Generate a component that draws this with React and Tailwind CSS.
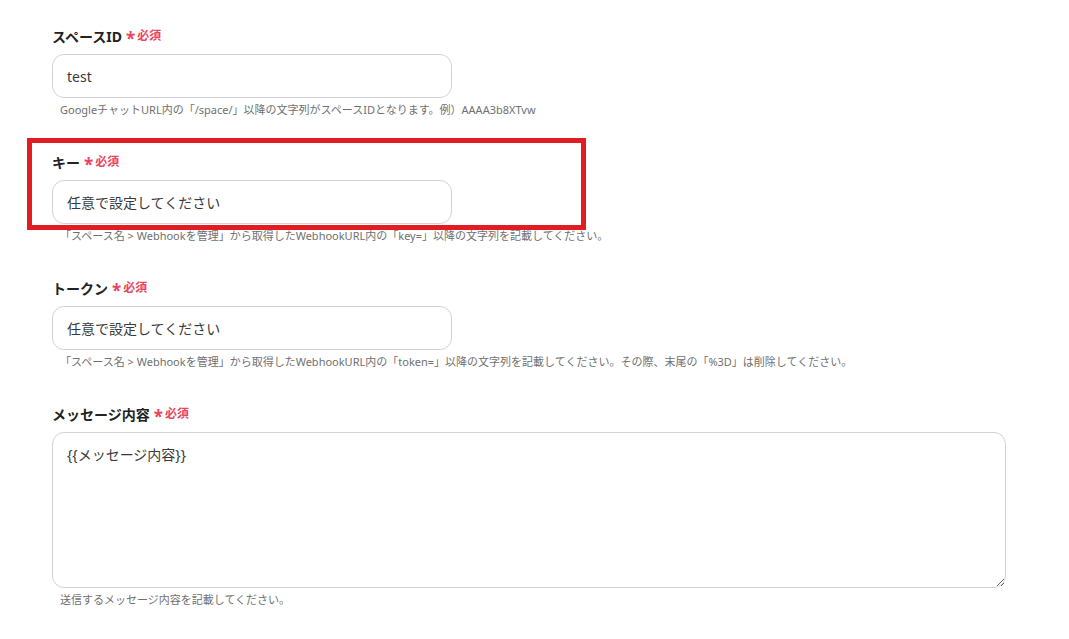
import React from "react";

const font = { fontFamily: '"Noto Sans", "Noto Sans CJK JP", sans-serif' };

const Label = ({ children }) => (
  <div className="flex items-center h-5 mb-2">
    <span className="text-[14px] font-bold text-[#222]">{children}</span>
    <span className="ml-1 text-[17px] font-bold text-[#e94560] leading-none mt-[5px]">*</span>
    <span className="ml-[2px] text-[12px] font-bold text-[#e94560]">必須</span>
  </div>
);

const Field = ({ label, value, help }) => (
  <div className="mb-[34px]">
    <Label>{label}</Label>
    <div className="w-[400px] h-[44px] rounded-xl border border-[#cfd3da] bg-white flex items-center px-[14px] text-[14px] text-[#3a3a3a]">
      {value}
    </div>
    <p className="mt-1 ml-2 text-[11px] leading-4 text-[#707070]">{help}</p>
  </div>
);

export default function App() {
  return (
    <div className="relative min-h-[639px] bg-white" style={font}>
      <main className="pl-[52px] pt-[26px] pr-[63px]">
        <Field
          label="スペースID"
          value="test"
          help="GoogleチャットURL内の「/space/」以降の文字列がスペースIDとなります。例）AAAA3b8XTvw"
        />
        <Field
          label="キー"
          value="任意で設定してください"
          help="「スペース名 > Webhookを管理」から取得したWebhookURL内の「key=」以降の文字列を記載してください。"
        />
        <Field
          label="トークン"
          value="任意で設定してください"
          help="「スペース名 > Webhookを管理」から取得したWebhookURL内の「token=」以降の文字列を記載してください。その際、末尾の「%3D」は削除してください。"
        />
        <div>
          <Label>メッセージ内容</Label>
          <textarea
            defaultValue="{{メッセージ内容}}"
            className="block w-[954px] h-[156px] rounded-xl border border-[#cfd3da] px-[14px] py-[11px] text-[14px] text-[#3a3a3a] outline-none"
            style={font}
          />
          <p className="mt-1 ml-2 text-[11px] leading-4 text-[#707070]">
            送信するメッセージ内容を記載してください。
          </p>
        </div>
      </main>

      {/* annotation box */}
      <div className="absolute left-[27px] top-[138px] w-[559px] h-[92px] border-[5px] border-[#e31b23] pointer-events-none" />
    </div>
  );
}
